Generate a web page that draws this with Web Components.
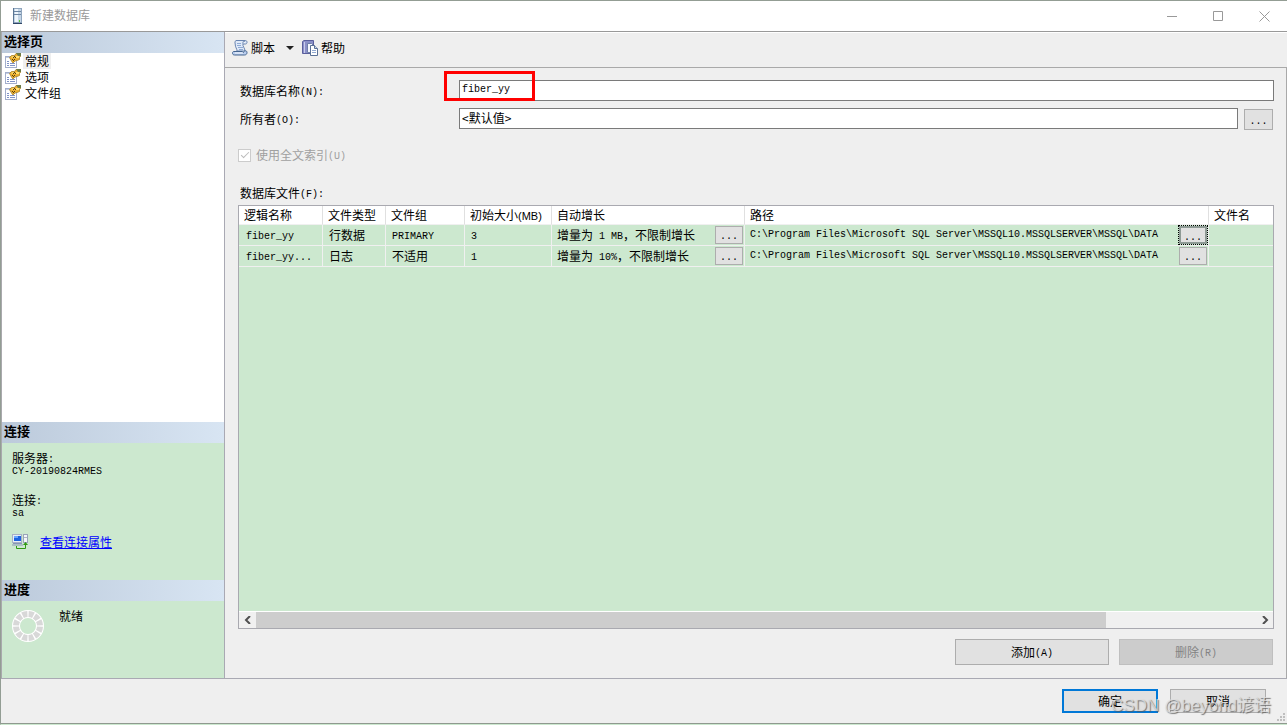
<!DOCTYPE html>
<html lang="zh-CN">
<head>
<meta charset="utf-8">
<title>新建数据库</title>
<style>
  html, body { margin: 0; height: 100%; }
  body {
    font: 12px/16px "Noto Sans CJK SC", sans-serif;
    color: #000;
    background: #cce8cf;
  }
</style>
</head>
<body>
<new-database-dialog></new-database-dialog>

<script>
const define = (name, html) => {
  const template = document.createElement('template');
  template.innerHTML = html.trim();
  customElements.define(name, class extends HTMLElement {
    constructor() {
      super();
      this.attachShadow({ mode: 'open' }).append(template.content.cloneNode(true));
    }
  });
};

/* Half-width Latin run inside Chinese text */
define('half-text', `<style>:host { font-family: "Liberation Mono", monospace; font-size: 10px; line-height: 10px; vertical-align: 1px; white-space: pre; }</style><slot></slot>`);

define('page-icon', `
<style>:host { display: block; width: 16px; height: 16px; } svg { display: block; }</style>
<svg width="16" height="16" viewBox="0 0 16 16">
  <rect x="0.5" y="3.500" width="11" height="11" fill="#fff" stroke="#a3aecb"/>
  <path d="M1 4h8v1H1z" fill="#c3cee4"/>
  <path d="M2 8.500h2M2 10.500h2M5 10.500h5M2 12.500h2M5 12.500h5" stroke="#7f92c6"/>
  <path d="M4.500 4.500l2-2 3 0 1.500-2h4.500v3l-1 1v2l-2.500 1-2 .5-2 2-1.500-2z" fill="#eeb02f" stroke="#a5812c" stroke-width=".8"/>
  <path d="M11 0h5v3h-3z" fill="#6e7a45"/>
  <path d="M6 4l2-1 2 1-2 1zM11 3h3v2h-3z" fill="#ffdf70"/>
  <path d="M9 3h1v1H9zM8 4h1v1H8zM10 4h1v1h-1zM7 6h1v1H7zM9 6h1v1H9zM8 7h1v1H8z" fill="#4d3c12"/>
</svg>`);

define('server-icon', `
<style>:host { display: block; width: 16px; height: 16px; } svg { display: block; }</style>
<svg width="16" height="16" viewBox="0 0 16 16">
  <rect x="4" y="0" width="9" height="15" fill="#8fa5bd"/>
  <rect x="4" y="0" width="1" height="15" fill="#5b7694"/>
  <rect x="5" y="1" width="7" height="13" fill="#c4d5e6"/>
  <rect x="6" y="1" width="3" height="13" fill="#eef5fb"/>
  <path d="M5 3.500h7M5 6.500h7" stroke="#6d86a3"/>
  <path d="M4 15h9v1H4z" fill="#2f4666"/>
  <path d="M10 12h1v2h-1z" fill="#5bd02c"/>
</svg>`);

define('script-icon', `
<style>:host { display: block; width: 16px; height: 16px; } svg { display: block; }</style>
<svg width="16" height="16" viewBox="0 0 16 16">
  <path d="M4 .5h9.500c2 0 2 3.500 0 3.500h-2.500c-.8 2 2 4 2 7h-8c0-2.500-1.800-3.500-1.800-7C3 2.500 2.500 1.500 4 .5z" fill="#dfe9f8" stroke="#6984b0"/>
  <path d="M11 4V2c0-1 2-1 2 0" fill="#fff" stroke="#6984b0"/>
  <path d="M5 3.500h4M5 5.500h4M6 7.500h5M7 9.500h4" stroke="#8faad4"/>
  <path d="M1.500 11.500h8.500l1.500 1c0-2 3.500-2.500 3.500 0 0 1.500-1 2.500-2.500 2.500h-10c-2.500 0-2.500-3-1-3.500z" fill="#b9cdee" stroke="#45658f"/>
  <path d="M3 13h8" stroke="#f5f9ff"/>
</svg>`);

define('help-icon', `
<style>:host { display: block; width: 16px; height: 16px; } svg { display: block; }</style>
<svg width="16" height="16" viewBox="0 0 16 16">
  <path d="M.5 1.500L2 .5h9.500v13H.5z" fill="#8b90c8" stroke="#5a5f9c"/>
  <path d="M2.500 2v11" stroke="#c9ccec"/>
  <path d="M5.500 3.500h4l2 2v7h-6z" fill="#f4f7fd" stroke="#6f7fa8"/>
  <path d="M8.500 5.500h4l3 3v7h-7z" fill="#fff" stroke="#5a7196"/>
  <path d="M12.500 5.500v3h3" fill="#cad7ec" stroke="#5a7196"/>
  <path d="M10 10.500h4M10 12.500h4" stroke="#91a9d1"/>
</svg>`);

define('connection-icon', `
<style>:host { display: block; width: 16px; height: 16px; } svg { display: block; }</style>
<svg width="16" height="16" viewBox="0 0 16 16">
  <rect x=".5" y=".5" width="9" height="8" fill="#e8edf5" stroke="#a7b1c6"/>
  <rect x="2" y="2" width="7" height="5" fill="#1d63e0"/>
  <path d="M2 2h4v2H2z" fill="#69a7ff"/>
  <path d="M1 9.500h9M0 11h11" stroke="#8795b6"/>
  <rect x="11.500" y=".5" width="4" height="8" fill="#f3f5fa" stroke="#9aa4b8"/>
  <path d="M12 3.500h3" stroke="#aeb7c7"/>
  <path d="M4.500 12v2.500h9V10" fill="none" stroke="#2f9a12"/>
  <path d="M11 11l2.500-3 2.500 3z" fill="#2f9a12"/>
</svg>`);

define('progress-ring', `
<style>:host { display: block; width: 32px; height: 32px; } svg { display: block; }</style>
<svg width="32" height="32" viewBox="0 0 32 32">
  <circle cx="16" cy="16" r="12" fill="none" stroke="#fff" stroke-width="8"/>
  <circle cx="16" cy="16" r="12" fill="none" stroke="#d8d8d8" stroke-width="6" pathLength="120" stroke-dasharray="8 2" stroke-dashoffset="-1"/>
</svg>`);

define('title-bar', `
<style>
  :host { display: flex; align-items: center; height: 30px; padding-left: 8px; background: #fff; border-bottom: 1px solid #999; color: #999; }
  h1 { flex: 1; margin: 0 0 0 5px; padding-bottom: 2px; font: inherit; }
  button { width: 46px; height: 30px; padding: 0; border: 0; background: none; display: grid; place-items: center; }
  svg { display: block; fill: none; stroke: #999; }
</style>
<server-icon></server-icon>
<h1><slot></slot></h1>
<button aria-label="最小化"><svg width="11" height="11"><path d="M0 5.500h10"/></svg></button>
<button aria-label="最大化"><svg width="11" height="11"><path d="M.5.5h9v9h-9z"/></svg></button>
<button aria-label="关闭"><svg width="11" height="11"><path d="M.5.5l10 10M10.500.5l-10 10"/></svg></button>`);

define('side-section', `
<style>
  :host { display: block; }
  h2 { margin: 0; height: 21px; padding-left: 2px; font-size: 13px; line-height: 17px; background: linear-gradient(90deg, #bccadb, #d8e5f3); }
</style>
<h2><slot name="title"></slot></h2>
<slot></slot>`);

define('page-link', `
<style>
  :host { display: flex; align-items: center; gap: 2px; height: 16px; padding-left: 3px; }
  a { color: inherit; text-decoration: none; padding: 0 2px; }
  :host([selected]) a { background: #efefef; }
</style>
<page-icon></page-icon><a href="#"><slot></slot></a>`);

define('side-bar', `
<style>
  :host { display: flex; flex-direction: column; border-left: 1px solid #a9a9ad; border-right: 1px solid #a9a9b3; }
  .pages { flex: 1; background: #fff; }
  .connection { padding: 9px 10px 30px; line-height: 12px; }
  dl, dd { margin: 0; }
  dt, dd { height: 12px; }
  dd + dt { margin-top: 18px; }
  .link { display: flex; align-items: center; gap: 12px; margin-top: 16px; line-height: 16px; }
  .link a { color: #00f; }
  .progress { display: flex; gap: 15px; padding: 9px 10px 36px; line-height: 12px; }
</style>
<side-section class="pages"><span slot="title">选择页</span>
  <page-link selected>常规</page-link>
  <page-link>选项</page-link>
  <page-link>文件组</page-link>
</side-section>
<side-section><span slot="title">连接</span>
  <div class="connection">
    <dl>
      <dt>服务器<half-text>:</half-text></dt><dd><half-text>CY-20190824RMES</half-text></dd>
      <dt>连接<half-text>:</half-text></dt><dd><half-text>sa</half-text></dd>
    </dl>
    <div class="link"><connection-icon></connection-icon><a href="#">查看连接属性</a></div>
  </div>
</side-section>
<side-section><span slot="title">进度</span>
  <div class="progress"><progress-ring></progress-ring><span>就绪</span></div>
</side-section>`);

define('tool-bar', `
<style>
  :host { box-sizing: border-box; display: flex; align-items: center; height: 35px; padding: 0 8px 4px 7px; border-bottom: 1px solid #a9a9a9; }
  button { display: flex; align-items: center; gap: 3px; padding: 0; border: 0; background: none; font: inherit; color: inherit; height: 22px; }
  .arrow { padding: 0 8px 0 11px; }
</style>
<button><script-icon></script-icon>脚本</button>
<button class="arrow" aria-label="脚本选项"><svg width="8" height="4"><path d="M0 0h8L4 4z" fill="#222"/></svg></button>
<button><help-icon></help-icon>帮助</button>`);

/* Flat push button; its size is set by whoever places it */
class PushButton extends HTMLElement {
  constructor() {
    super();
    this.attachShadow({ mode: 'open' }).innerHTML = `
<style>
  :host { display: block; height: 26px; }
  button { display: block; box-sizing: border-box; width: 100%; height: 100%; padding: 0; border: 1px solid #adadad; background: #e1e1e1; font: inherit; color: #000; }
  :host([primary]) button { border: 2px solid #0078d7; }
  :host([focused]) button { border: 2px solid #8e9a95; outline: 1px dotted #000; }
  button:disabled { background: #ccc; border-color: #bfbfbf; color: #838383; }
</style><button><slot></slot></button>`;
    this.shadowRoot.querySelector('button').disabled = this.hasAttribute('disabled');
  }
}
customElements.define('push-button', PushButton);

define('file-grid', `
<style>
  :host { display: flex; flex-direction: column; border: 1px solid #a9a9b0; background: #cce8cf; min-width: 0; }
  .body { flex: 1; overflow: hidden; }
  table { width: 100%; table-layout: fixed; border-collapse: separate; border-spacing: 0; }
  th, td { box-sizing: border-box; padding: 0 0 0 5px; text-align: left; font-weight: normal; white-space: nowrap; overflow: hidden; border-right: 1px solid #f0f0f0; border-bottom: 1px solid #f0f0f0; }
  th { height: 19px; background: #fff; border-right-color: #e0e0e0; line-height: 18px; }
  td { height: 21px; padding-left: 6px; line-height: 16px; }
  td:first-child { padding-left: 7px; }
  td:nth-child(5), td:nth-child(6) { padding-left: 5px; }
  th:last-child, td:last-child { border-right: 0; }
  small { font: 11px "Liberation Sans", sans-serif; }
  .cell { display: flex; align-items: center; justify-content: space-between; padding-right: 1px; }
  push-button { width: 28px; height: 18px; }
  .scroll { display: flex; align-items: center; height: 16px; background: #f0f0f0; border-top: 1px solid #fff; }
  .scroll button { width: 17px; height: 16px; padding: 0; border: 0; background: none; display: grid; place-items: center; }
  .scroll svg { fill: none; stroke: #505050; stroke-width: 2; }
  .track { flex: 1; align-self: stretch; display: flex; }
  .thumb { width: 85%; background: #cdcdcd; }
</style>
<div class="body">
<table aria-label="数据库文件">
  <colgroup><col style="width:84px"><col style="width:63px"><col style="width:79px"><col style="width:87px"><col style="width:193px"><col><col style="width:64px"></colgroup>
  <thead><tr><th>逻辑名称</th><th>文件类型</th><th>文件组</th><th>初始大小<small>(MB)</small></th><th>自动增长</th><th>路径</th><th>文件名</th></tr></thead>
  <tbody>
    <tr>
      <td><half-text>fiber_yy</half-text></td><td>行数据</td><td><half-text>PRIMARY</half-text></td><td><half-text>3</half-text></td>
      <td><div class="cell"><span>增量为<half-text> 1 MB</half-text>，不限制增长</span><push-button><half-text>...</half-text></push-button></div></td>
      <td><div class="cell"><half-text>C:\\Program Files\\Microsoft SQL Server\\MSSQL10.MSSQLSERVER\\MSSQL\\DATA</half-text><push-button focused><half-text>...</half-text></push-button></div></td><td></td>
    </tr>
    <tr>
      <td><half-text>fiber_yy...</half-text></td><td>日志</td><td>不适用</td><td><half-text>1</half-text></td>
      <td><div class="cell"><span>增量为<half-text> 10%</half-text>，不限制增长</span><push-button><half-text>...</half-text></push-button></div></td>
      <td><div class="cell"><half-text>C:\\Program Files\\Microsoft SQL Server\\MSSQL10.MSSQLSERVER\\MSSQL\\DATA</half-text><push-button><half-text>...</half-text></push-button></div></td><td></td>
    </tr>
  </tbody>
</table>
</div>
<div class="scroll">
  <button aria-label="向左滚动"><svg width="8" height="8"><path d="M6 0L2 4l4 4"/></svg></button>
  <div class="track"><div class="thumb"></div></div>
  <button aria-label="向右滚动"><svg width="8" height="8"><path d="M2 0l4 4-4 4"/></svg></button>
</div>`);

define('general-page', `
<style>
  :host { display: flex; flex-direction: column; padding: 12px 12px 13px 13px; }
  .fields { display: grid; grid-template-columns: 221px 1fr; row-gap: 7px; align-items: center; }
  .fields label, .files { padding-left: 2px; }
  .fields label, .check, .files { height: 16px; }
  .box { position: relative; display: flex; }
  .row { display: flex; align-items: flex-end; gap: 6px; height: 22px; padding-right: 1px; }
  .row input { align-self: flex-start; }
  input[type=text] { box-sizing: border-box; flex: 1; min-width: 0; height: 21px; padding: 0 2px 2px; border: 1px solid #7a7a7a; background: #fff; font: inherit; color: inherit; }
  #name { font: 10px "Liberation Mono", monospace; }
  .mark { position: absolute; left: -15px; top: -9px; width: 85px; height: 24px; border: 3px solid #f00; }
  .row push-button { width: 29px; height: 21px; }
  .check { display: flex; align-items: center; gap: 5px; margin-top: 17px; color: #a0a0a0; }
  .check input { appearance: none; width: 13px; height: 13px; box-sizing: border-box; margin: 0; border: 1px solid #ccc; background: #fff; display: grid; place-items: center; }
  .check input::before { content: ""; width: 7px; height: 3px; border: solid #bbb; border-width: 0 0 1px 1px; transform: translateY(-1px) rotate(-45deg); }
  .files { margin: 22px 0 4px; }
  file-grid { flex: 1; }
  .actions { display: flex; justify-content: flex-end; gap: 10px; margin-top: 10px; padding-right: 1px; }
  .actions push-button { width: 154px; }
</style>
<div class="fields">
  <label for="name">数据库名称<half-text>(N):</half-text></label>
  <div class="box"><input id="name" type="text" value="fiber_yy"><div class="mark"></div></div>
  <label for="owner">所有者<half-text>(O):</half-text></label>
  <div class="row"><input id="owner" type="text" value="&lt;默认值&gt;"><push-button><half-text>...</half-text></push-button></div>
</div>
<label class="check"><input type="checkbox" checked disabled><span>使用全文索引<half-text>(U)</half-text></span></label>
<div class="files">数据库文件<half-text>(F):</half-text></div>
<file-grid></file-grid>
<div class="actions">
  <push-button>添加<half-text>(A)</half-text></push-button>
  <push-button disabled>删除<half-text>(R)</half-text></push-button>
</div>`);

define('dialog-footer', `
<style>
  :host { position: relative; display: flex; justify-content: flex-end; gap: 12px; padding: 10px 21px 10px 0; }
  push-button { width: 96px; height: 24px; }
  .watermark { position: absolute; right: 16px; top: 16px; font: 17px/22px "Liberation Sans", "Noto Sans CJK SC", sans-serif; color: rgba(225,225,225,.8); text-shadow: 1px 1px 1px rgba(90,90,90,.8); white-space: nowrap; pointer-events: none; }
  .grip { position: absolute; right: 2px; bottom: 2px; fill: #bfbfbf; }
</style>
<push-button primary>确定</push-button>
<push-button>取消</push-button>
<span class="watermark">CSDN @beyond谚语</span>
<svg class="grip" width="8" height="8"><path d="M6 0h2v2H6zM3 3h2v2H3zM6 3h2v2H6zM0 6h2v2H0zM3 6h2v2H3zM6 6h2v2H6z"/></svg>`);

define('new-database-dialog', `
<style>
  :host { box-sizing: border-box; display: flex; flex-direction: column; min-height: 100vh; border: solid #939d94; border-width: 1px 0 0 1px; border-bottom: 1px solid #cce8cf; background: #efefef; }
  main { flex: 1; display: grid; grid-template-columns: 224px 1fr; border-bottom: 1px solid #a9a9b3; }
  side-bar { background: #cce8cf; }
  .content { display: flex; flex-direction: column; min-width: 0; border-top: 1px solid #fff; }
  general-page { flex: 1; border-right: 1px solid #a9a9a9; }
  dialog-footer { border-bottom: 1px solid #8f998f; }
</style>
<title-bar>新建数据库</title-bar>
<main>
  <side-bar></side-bar>
  <div class="content">
    <tool-bar></tool-bar>
    <general-page></general-page>
  </div>
</main>
<dialog-footer></dialog-footer>`);
</script>
</body>
</html>
